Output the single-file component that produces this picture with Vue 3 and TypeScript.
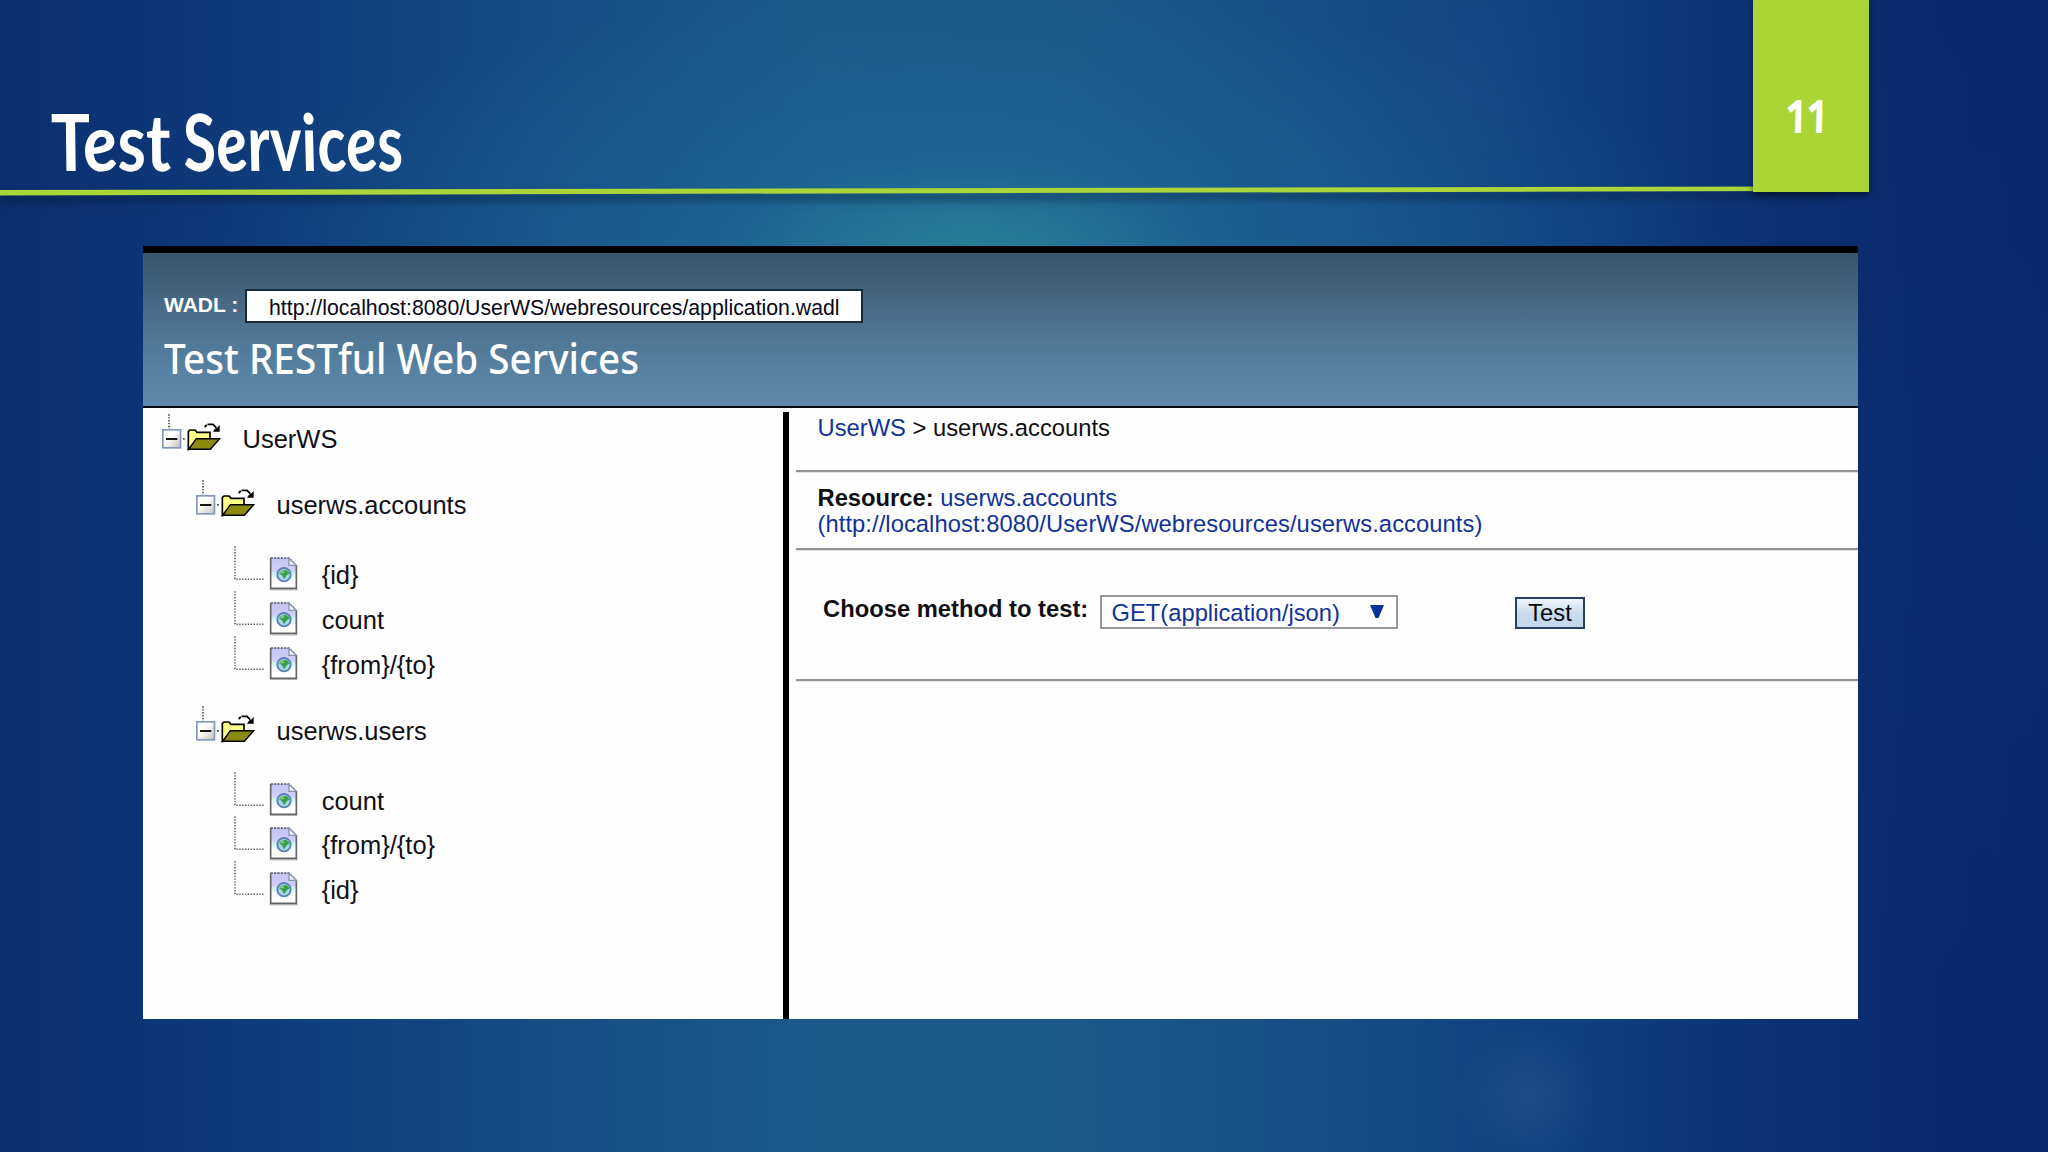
<script setup lang="ts">
interface Group {
  name: string
  items: string[]
}

const groups: Group[] = [
  { name: 'userws.accounts', items: ['{id}', 'count', '{from}/{to}'] },
  { name: 'userws.users', items: ['count', '{from}/{to}', '{id}'] },
]
</script>

<template>
  <div class="slide">
    <!-- shared tree glyphs -->
    <svg class="defs" width="0" height="0" aria-hidden="true">
      <defs>
        <linearGradient id="boxFill" x1="0" y1="0" x2="1" y2="1">
          <stop offset="0.4" stop-color="#ffffff" />
          <stop offset="1" stop-color="#c5bdb8" />
        </linearGradient>
        <linearGradient id="pageFill" x1="0" y1="0" x2="0" y2="1">
          <stop offset="0" stop-color="#c4c2f2" />
          <stop offset="0.42" stop-color="#d0d0fa" />
          <stop offset="0.5" stop-color="#c9f3fb" />
          <stop offset="0.72" stop-color="#ffffff" />
        </linearGradient>
        <symbol id="folder" viewBox="45 0 180 114">
          <path d="M69 1V46" stroke="#333" stroke-width="4.500" stroke-dasharray="4 4.6" />
          <rect x="50.5" y="47.500" width="53" height="54" fill="url(#boxFill)" stroke="#8199c0" stroke-width="5" />
          <path d="M60 75H94" stroke="#000" stroke-width="5.500" />
          <rect x="111" y="72" width="5" height="5" fill="#444" />
          <path d="M127 107V52L132 48H147L153 55H192V75H153L130 106Z" fill="#ffff8c" stroke="#000" stroke-width="5" />
          <path d="M151 74H221L193 106H128Z" fill="#8b8b12" stroke="#000" stroke-width="4.500" />
          <path d="M176 39L184 31H201L211 41" fill="none" stroke="#000" stroke-width="5.500" stroke-dasharray="9 3 30 0" />
          <path d="M221 32V53H201L207 44L215 40Z" fill="#000" />
        </symbol>
        <symbol id="leaf" viewBox="160 198 200 134.400">
          <path d="M166 199V298H252" fill="none" stroke="#555" stroke-width="4.500" stroke-dasharray="4 4.600" />
          <rect x="270" y="326" width="84" height="6" fill="#c9c9c9" />
          <path d="M273 234H328L350 256V325H273Z" fill="url(#pageFill)" />
          <path d="M273 234V325H350V258" fill="none" stroke="#62666b" stroke-width="5" />
          <path d="M273 234H328L350 257" fill="none" stroke="#555b68" stroke-width="4.500" stroke-dasharray="7 3" />
          <path d="M328 235V256H350Z" fill="#eef6fb" stroke="#8b94ad" stroke-width="4" />
          <circle cx="313" cy="284" r="20" fill="#a7d5e6" stroke="#5c82b4" stroke-width="5.500" />
          <path d="M298 279Q305 270 320 270L330 279L320 287L313 298L308 287Z" fill="#3aa047" />
          <path d="M300 279Q305 273 314 273L311 280Z" fill="#94d37b" />
        </symbol>
      </defs>
    </svg>

    <header class="top">
      <svg class="title" width="600" height="246" viewBox="0 0 600 246">
        <g transform="translate(4 171) skewX(7)">
          <text x="50" y="0" textLength="121" lengthAdjust="spacingAndGlyphs">Test</text>
          <text x="182" y="0" textLength="220" lengthAdjust="spacingAndGlyphs">Services</text>
        </g>
      </svg>
      <svg class="rule" width="1860" height="30" viewBox="0 0 1860 30">
        <polygon points="0,10 1835,6.500 1835,11 0,15.500" />
      </svg>
      <div class="number">
        <svg width="115" height="192" viewBox="0 0 115 192">
          <text transform="translate(35 133) skewX(9)" textLength="42" lengthAdjust="spacingAndGlyphs">11</text>
        </svg>
      </div>
    </header>

    <main class="panel">
      <div class="banner">
        <div class="wadl">
          <span class="wadl-label">WADL :</span>
          <span class="wadl-url">http://localhost:8080/UserWS/webresources/application.wadl</span>
        </div>
        <svg class="heading" width="640" height="68" viewBox="0 0 640 68">
          <text x="0" y="48" textLength="475" lengthAdjust="spacingAndGlyphs">Test RESTful Web Services</text>
        </svg>
      </div>
      <div class="body">
        <nav class="tree">
          <div class="node">
            <svg class="folder"><use href="#folder" /></svg>
            <span>UserWS</span>
          </div>
          <section v-for="g in groups" :key="g.name" class="group">
            <div class="node">
              <svg class="folder"><use href="#folder" /></svg>
              <span>{{ g.name }}</span>
            </div>
            <div v-for="item in g.items" :key="item" class="leaf-row">
              <svg class="leaf"><use href="#leaf" /></svg>
              <span>{{ item }}</span>
            </div>
          </section>
        </nav>
        <section class="detail">
          <div class="crumbs"><a>UserWS</a> &gt; userws.accounts</div>
          <div class="resource">
            <div><b>Resource:</b> <a>userws.accounts</a></div>
            <a class="uri">(http://localhost:8080/UserWS/webresources/userws.accounts)</a>
          </div>
          <div class="form">
            <b class="choose">Choose method to test:</b>
            <div class="select">
              <span>GET(application/json)</span>
              <svg width="14" height="14" viewBox="0 0 14 14"><path d="M0 0H14L8.500 13H5.500Z" fill="#0b3198" /></svg>
            </div>
            <button class="test">Test</button>
          </div>
        </section>
      </div>
    </main>
  </div>
</template>

<style>
body {
  margin: 0;
  overflow: hidden;
}
</style>

<style scoped>
.slide {
  width: 2048px;
  height: 1152px;
  overflow: hidden;
  font-family: "Liberation Sans", Arial, sans-serif;
  background:
    radial-gradient(ellipse 240px 80px at 970px 245px, rgba(50, 145, 150, 0.5), rgba(50, 145, 150, 0) 100%),
    radial-gradient(ellipse 750px 250px at 970px 240px, rgba(36, 120, 165, 0.5), rgba(36, 120, 165, 0) 100%),
    radial-gradient(circle 70px at 1530px 1095px, rgba(42, 85, 145, 0.5), rgba(42, 85, 145, 0) 100%),
    radial-gradient(circle 110px at 1470px 60px, rgba(32, 75, 140, 0.35), rgba(32, 75, 140, 0) 100%),
    radial-gradient(ellipse 340px 500px at 2048px 500px, rgba(10, 50, 120, 0.3), rgba(10, 50, 120, 0) 100%),
    linear-gradient(90deg, #0a2f6e 0, #0c3475 6%, #0f3d7c 14%, #154c84 26%, #1b5a8a 40%, #1b5989 52%, #154c85 66%, #0f3e7e 78%, #0b3072 87%, #082a6c 94%, #07286a 100%);
}

.defs {
  position: absolute;
}

.top {
  position: relative;
  height: 246px;
}

.title {
  display: block;
  overflow: visible;
}

.title text {
  fill: #fff;
  font: italic 700 79px Lato, sans-serif;
}

.rule {
  position: absolute;
  left: 0;
  top: 180px;
  overflow: visible;
  filter: drop-shadow(0 6px 4px rgba(0, 20, 40, 0.6));
}

.rule polygon {
  fill: #a9d638;
}

.number {
  position: absolute;
  left: 1753px;
  top: 0;
  width: 116px;
  height: 192px;
  background: #abd534;
  box-shadow: 0 3px 6px rgba(0, 15, 40, 0.7);
}

.number text {
  fill: #fff;
  font: italic 700 46px "Open Sans", sans-serif;
}

.panel {
  display: flex;
  flex-direction: column;
  box-sizing: border-box;
  width: 1715px;
  height: 773px;
  margin-left: 142.500px;
  background: #fefefe;
  border-top: 7px solid #000;
}

.banner {
  box-sizing: border-box;
  height: 155px;
  padding: 36px 0 0 21.500px;
  border-bottom: 2px solid #060d14;
  background: linear-gradient(#3a556b, #41617a 20%, #4b708e 45%, #5681a2 75%, #5f88aa);
}

.wadl {
  display: flex;
  height: 34px;
}

.wadl-label {
  width: 81px;
  color: #fff;
  font-size: 21px;
  font-weight: 700;
  line-height: 32px;
  white-space: nowrap;
}

.wadl-url {
  box-sizing: border-box;
  width: 618px;
  padding-left: 22px;
  border: 2px solid #172b3b;
  background: #fff;
  color: #080818;
  font-size: 21.250px;
  line-height: 35px;
  white-space: nowrap;
}

.heading {
  display: block;
  margin-top: 3px;
  overflow: visible;
}

.heading text {
  fill: #fff;
  font: 500 42px "Noto Sans", sans-serif;
}

.body {
  display: flex;
  flex: 1;
}

.tree {
  box-sizing: border-box;
  width: 640.500px;
  padding: 6px 0 0 18.500px;
  color: #111118;
  font-size: 25.500px;
  line-height: 28px;
}

.node,
.leaf-row {
  display: flex;
  align-items: flex-start;
}

.node {
  height: 66px;
}

.group {
  height: 225.500px;
  padding-left: 34px;
}

.leaf-row {
  height: 44.800px;
  padding-left: 38px;
}

.folder {
  width: 60px;
  height: 38px;
}

.leaf {
  width: 66.700px;
  height: 44.800px;
}

.node span {
  margin: 11px 0 0 21.500px;
}

.leaf-row span {
  margin: 15px 0 0 22px;
}

.detail {
  flex: 1;
  margin-top: 4px;
  padding-left: 7px;
  border-left: 6px solid #000;
  color: #101014;
  font-size: 23.750px;
  line-height: 25.500px;
}

.detail a {
  color: #12329a;
}

.crumbs,
.resource,
.form {
  box-sizing: border-box;
  border-bottom: 2px solid #929294;
  box-shadow: 0 1px 0 #e4e4e4;
}

.crumbs {
  height: 60px;
  padding: 3px 0 0 21.500px;
}

.resource {
  height: 78px;
  padding: 13px 0 0 21.500px;
}

.uri {
  letter-spacing: 0.060px;
}

.form {
  display: flex;
  height: 131px;
  padding: 45px 0 0 27px;
}

.choose {
  width: 277px;
  margin-top: 1px;
  white-space: nowrap;
}

.select {
  display: flex;
  box-sizing: border-box;
  align-items: center;
  justify-content: space-between;
  width: 298px;
  height: 34px;
  padding: 0 12px 0 9.500px;
  border: 2px solid #98989c;
  color: #12329a;
}

.select span {
  margin-top: 1px;
}

.select svg {
  margin-bottom: 1px;
}

.test {
  box-sizing: border-box;
  width: 70px;
  height: 32px;
  margin: 2px 0 0 117px;
  padding: 1px 0 0;
  border: 2px solid #27405f;
  background: linear-gradient(#f0f5fa, #c9dbee 50%, #c4d6ea);
  color: #08080f;
  font: 23.700px/25px "Liberation Sans", Arial, sans-serif;
}
</style>
